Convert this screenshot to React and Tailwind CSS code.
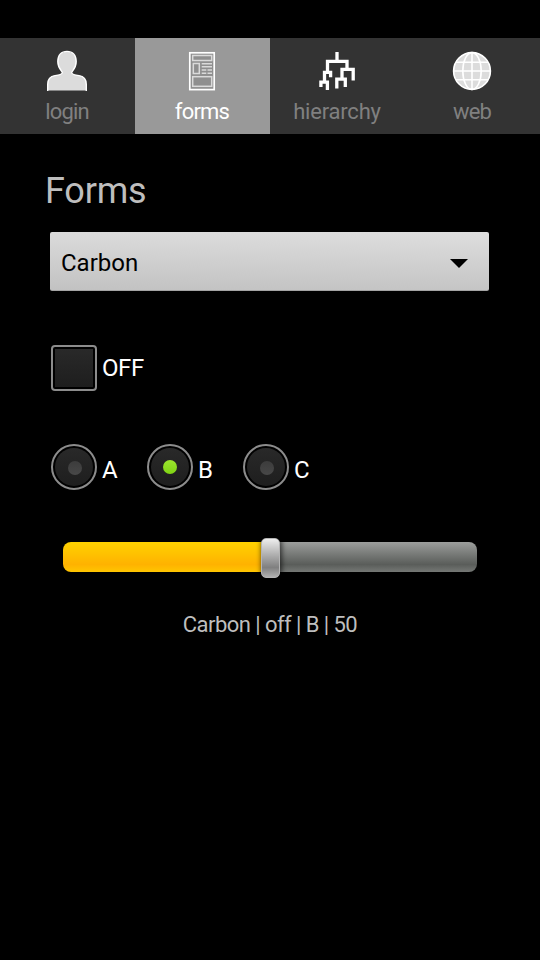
import React from 'react';

function LoginIcon() {
  return (
    <svg width="43" height="42" viewBox="0 0 43 42" className="block">
      <path
        d="M1.7 40.5V34.5C1.7 29 4.5 26.2 9 25.6C13 25.2 16.4 24.6 16.4 22.6C16 21 11.8 18.5 11.8 11.6C11.8 5 15.5 1.4 21 1.4S30.2 5 30.2 11.6C30.2 18.5 26 21 25.6 22.6C25.6 24.6 29 25.2 33 25.6C37.5 26.2 40.3 29 40.3 34.5V40.5Z"
        fill="#dcdcdc"
      />
      <path
        d="M1.7 41V34.5C1.7 29 4.5 26.2 9 25.6C13 25.2 16.4 24.6 16.4 22.6C16 21 11.8 18.5 11.8 11.6C11.8 5 15.5 1.4 21 1.4S30.2 5 30.2 11.6C30.2 18.5 26 21 25.6 22.6C25.6 24.6 29 25.2 33 25.6C37.5 26.2 40.3 29 40.3 34.5V41"
        fill="none"
        stroke="#fff"
        strokeWidth="1.4"
      />
    </svg>
  );
}

function FormsIcon() {
  return (
    <svg width="43" height="42" viewBox="0 0 43 42" className="block" fill="none">
      <rect x="8.8" y="2.8" width="24.4" height="36.8" fill="#8f8f8f" stroke="#fff" strokeWidth="1.7" />
      <g stroke="#dadada" strokeWidth="1.5">
        <rect x="11.7" y="5.5" width="19" height="5" />
        <rect x="12.3" y="13.5" width="6" height="10" />
        <rect x="11.7" y="26.7" width="19" height="9.6" />
        <path d="M20.7 13.7H31M20.7 16.8H31M20.7 20H25.3M26.5 20H31M20.7 23.2H25.3M26.5 23.2H31" />
      </g>
    </svg>
  );
}

function HierarchyIcon() {
  return (
    <svg width="43" height="42" viewBox="0 0 43 42" className="block" fill="none" stroke="#fff" strokeWidth="3.3">
      <path d="M21 2V11M11.5 22V11.4H31V19M26 28V19.3H37.2V30.5M20.8 38.5V29.2H29.3V37M8.5 31V22.3H14.6V27.3M4.9 37V32.2H11.4V40" />
    </svg>
  );
}

function WebIcon() {
  return (
    <svg width="43" height="42" viewBox="0 0 43 42" className="block" fill="none" stroke="#fff" strokeWidth="1.6">
      <circle cx="21" cy="21" r="18.4" fill="#dcdcdc" />
      <path d="M21 2.6V39.4M2.6 21H39.4M4.9 12.3H37.1M4.9 29.7H37.1" />
      <ellipse cx="21" cy="21" rx="9.2" ry="18.4" />
    </svg>
  );
}

const tabs = [
  { label: 'login', Icon: LoginIcon, tracking: 'tracking-[-0.8px]' },
  { label: 'forms', Icon: FormsIcon, tracking: 'tracking-[-0.8px]', active: true },
  { label: 'hierarchy', Icon: HierarchyIcon, tracking: 'tracking-[-0.2px]' },
  { label: 'web', Icon: WebIcon, tracking: 'tracking-[-0.9px]' },
];

function TabBar() {
  return (
    <nav className="grid h-24 grid-cols-4 bg-[#333]">
      {tabs.map(({ label, Icon, tracking, active }) => (
        <button
          key={label}
          className={`flex flex-col items-center pt-3 ${active ? 'bg-[#999] text-white' : 'text-[#808080]'}`}
        >
          <Icon />
          <span className={`mt-2 mr-px text-[22px] leading-6 ${tracking}`}>{label}</span>
        </button>
      ))}
    </nav>
  );
}

function Radio({ label, selected }) {
  return (
    <label className="flex w-24 items-center">
      <span className="flex size-[46px] shrink-0 items-center justify-center rounded-full border-2 border-[#8c8c8c] bg-black">
        <span className="flex size-[38px] items-center justify-center rounded-full bg-linear-to-b from-[#292929] to-[#1e1e1e]">
          <span
            className={`size-[14px] rounded-full ${
              selected
                ? 'bg-linear-to-b from-[#9be62d] to-[#80d313]'
                : 'mt-0.5 ml-px bg-linear-to-b from-[#3c3c3c] to-[#484848]'
            }`}
          />
        </span>
      </span>
      <span className="mt-1.5 ml-[5px] text-2xl leading-7 text-white">{label}</span>
    </label>
  );
}

export default function App() {
  return (
    <div className="h-[960px] w-[540px] overflow-hidden bg-black pt-[38px] font-['Roboto',sans-serif]">
      <TabBar />
      <main className="flex flex-col pt-9">
        <h1 className="ml-[45px] text-[36px] leading-[42px] tracking-[-0.2px] text-[#bebebe]">Forms</h1>
        <div className="mt-5 ml-[50px] flex h-[59px] w-[439px] items-center justify-between rounded-[2px] border-b border-[#a4a4a4] bg-linear-[181deg] from-[#dedede] to-[#c2c2c2] pt-1 pr-[21px] pl-[11px]">
          <span className="text-2xl leading-7 text-black">Carbon</span>
          <svg width="18" height="9" viewBox="0 0 18 9" className="block">
            <path d="M0 0H18L9 9Z" fill="#000" />
          </svg>
        </div>
        <label className="mt-[54px] ml-[51px] flex items-center">
          <span className="flex size-[46px] items-center justify-center rounded-[4px] border-2 border-[#8c8c8c] bg-black">
            <span className="size-[38px] bg-linear-to-b from-[#292929] to-[#1e1e1e]" />
          </span>
          <span className="ml-[5px] text-2xl leading-7 tracking-[-0.4px] text-white">OFF</span>
        </label>
        <div className="mt-[53px] ml-[51px] flex">
          <Radio label="A" />
          <Radio label="B" selected />
          <Radio label="C" />
        </div>
        <div className="relative mt-[52px] ml-[63px] flex h-[30px] w-[414px]">
          <div className="w-[207px] rounded-l-lg bg-linear-to-b from-[#ffd200] via-[#ffb200] via-75% to-[#ffc600]" />
          <div className="w-[207px] rounded-r-lg bg-linear-to-b from-[#9c9e9c] via-[#5a5d5a] via-75% to-[#757875]" />
          <div className="absolute -top-1 left-[198px] h-10 w-[19px] rounded-[5px] border border-[#b4b4b4] bg-linear-to-b from-[#eee] via-[#808080] via-75% to-[#b0b0b0] shadow-[1px_0_5px_1px_rgba(0,0,0,0.6)]" />
        </div>
        <p className="mt-[41px] text-center text-[22px] leading-6 tracking-[-0.55px] text-[#bebebe]">
          Carbon | off | B | 50
        </p>
      </main>
    </div>
  );
}
